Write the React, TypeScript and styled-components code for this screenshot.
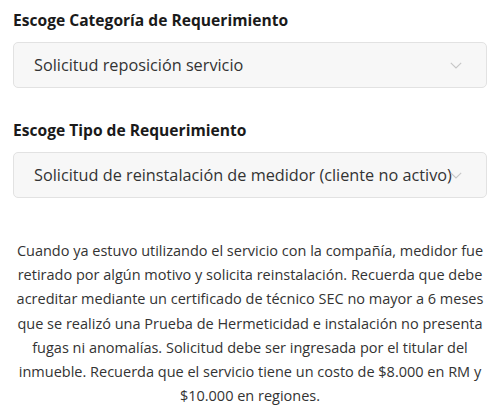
import React from "react";
import styled, { createGlobalStyle } from "styled-components";

const GlobalStyle = createGlobalStyle`
  body {
    margin: 0;
    background: #ffffff;
    font-family: "Open Sans", "Noto Sans", sans-serif;
    color: #222;
  }
`;

const Page = styled.div`
  width: 500px;
  padding: 10px 13px 0;
  box-sizing: border-box;
  display: flex;
  flex-direction: column;
  gap: 32px;
`;

const Field = styled.div`
  display: flex;
  flex-direction: column;
`;

const Label = styled.label`
  font-size: 15.6px;
  font-weight: 700;
  color: #1a1a1a;
  line-height: 20px;
  margin-bottom: 12px;
`;

const SelectBox = styled.div`
  display: flex;
  align-items: center;
  height: 46px;
  padding: 0 24px 0 20px;
  background: #f7f7f7;
  border: 1px solid #e2e2e2;
  border-radius: 5px;
  box-sizing: border-box;
  font-size: 16.25px;
  color: #333;
`;

const Value = styled.span`
  white-space: nowrap;
  min-width: 0;
`;

const Chevron = styled.svg`
  flex: none;
  margin-left: auto;
  width: 12px;
  height: 7px;
`;

const Description = styled.p`
  margin: 9px 0 0;
  text-align: center;
  font-size: 14.5px;
  line-height: 24.2px;
  color: #333;
`;

function Select({ value }: { value: string }) {
  return (
    <SelectBox>
      <Value>{value}</Value>
      <Chevron viewBox="0 0 12 7">
        <path d="M0.8 0.8 L6 6 L11.2 0.8" fill="none" stroke="#c6c6c6" strokeWidth="1.1" />
      </Chevron>
    </SelectBox>
  );
}

export default function App() {
  return (
    <Page>
      <GlobalStyle />
      <Field>
        <Label>Escoge Categoría de Requerimiento</Label>
        <Select value="Solicitud reposición servicio" />
      </Field>
      <Field>
        <Label>Escoge Tipo de Requerimiento</Label>
        <Select value="Solicitud de reinstalación de medidor (cliente no activo)" />
      </Field>
      <Description>
        Cuando ya estuvo utilizando el servicio con la compañía, medidor fue retirado por algún motivo y
        solicita reinstalación. Recuerda que debe acreditar mediante un certificado de técnico SEC no mayor a 6
        meses que se realizó una Prueba de Hermeticidad e instalación no presenta fugas ni anomalías. Solicitud
        debe ser ingresada por el titular del inmueble. Recuerda que el servicio tiene un costo de $8.000 en RM
        y $10.000 en regiones.
      </Description>
    </Page>
  );
}
